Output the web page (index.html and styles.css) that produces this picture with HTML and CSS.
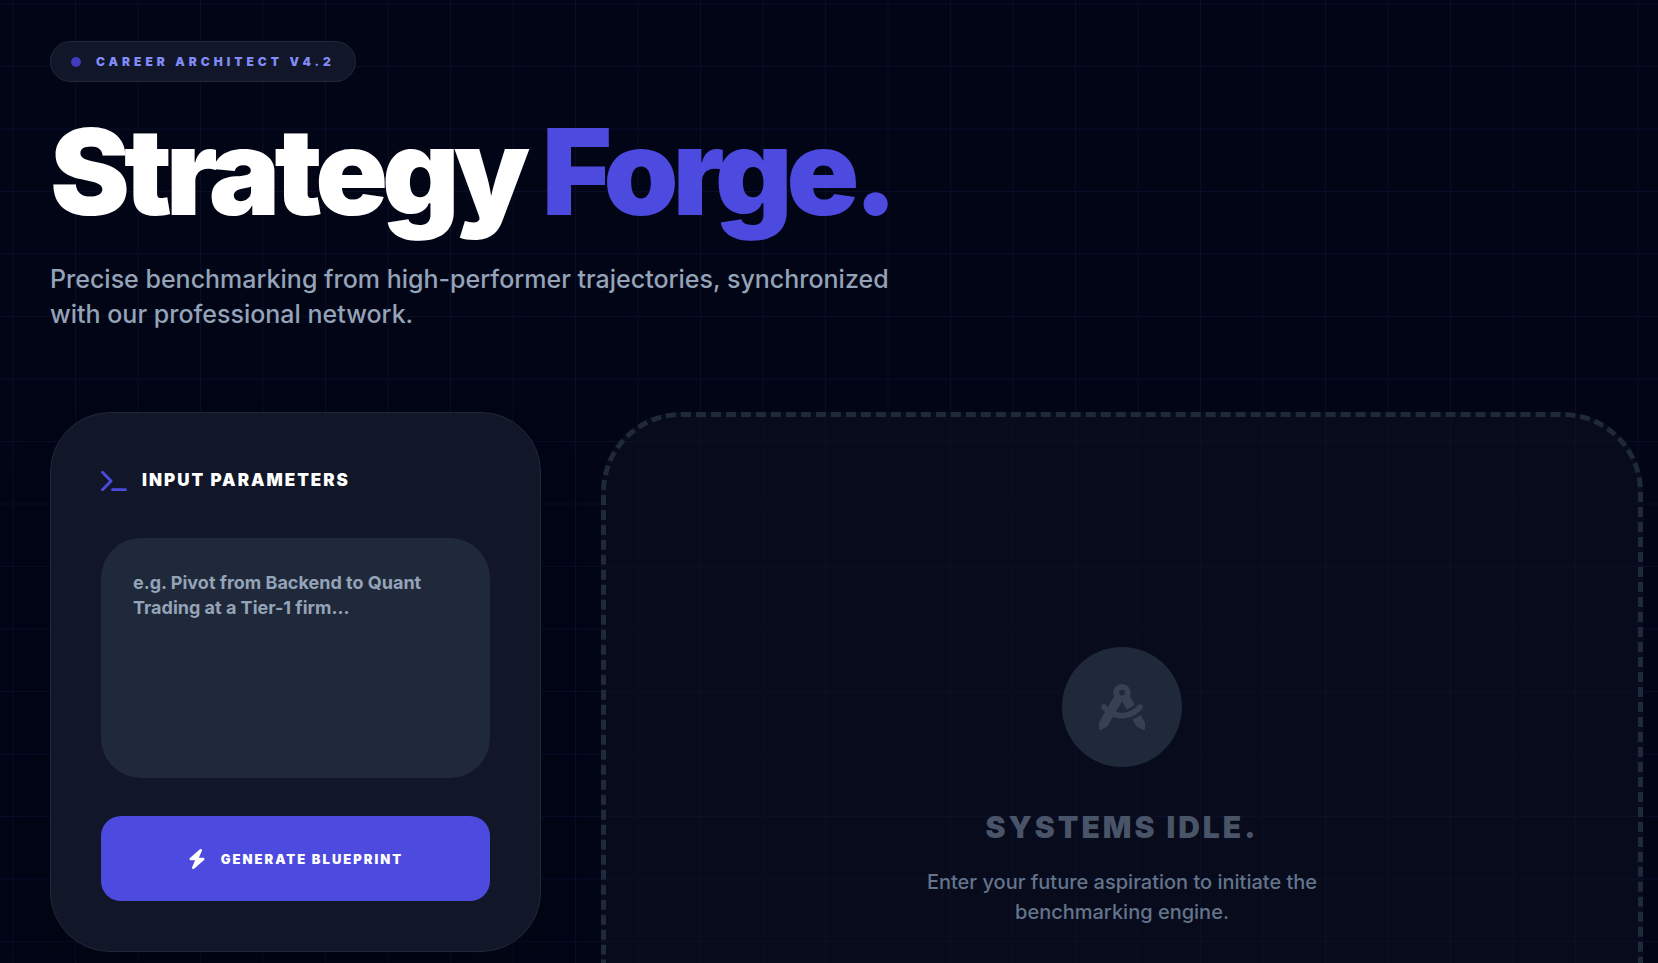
FILE: index.html
```html
<!DOCTYPE html>
<html lang="en">
<head>
	<meta charset="UTF-8">
	<meta name="viewport" content="width=device-width, initial-scale=1">
	<title>Strategy Forge</title>
	<link rel="stylesheet" href="styles.css">
</head>
<body>
	<header class="hero">
		<div class="badge"><span class="dot"></span>CAREER ARCHITECT V4.2</div>
		<h1>Strategy <span>Forge.</span></h1>
		<p>Precise benchmarking from high-performer trajectories, synchronized with our professional network.</p>
	</header>

	<main class="layout">
		<form class="card">
			<label class="card-title" for="goal">
				<svg class="icon-terminal" viewBox="0 0 576 512"><path d="M9.4 86.6C-3.1 74.1-3.1 53.9 9.4 41.4s32.8-12.5 45.3 0l192 192c12.5 12.5 12.5 32.8 0 45.3l-192 192c-12.5 12.5-32.8 12.5-45.3 0s-12.5-32.8 0-45.3L178.7 256 9.4 86.6zM256 416H544c17.7 0 32 14.3 32 32s-14.3 32-32 32H256c-17.7 0-32-14.3-32-32s14.3-32 32-32z"/></svg>
				INPUT PARAMETERS
			</label>
			<textarea id="goal" placeholder="e.g. Pivot from Backend to Quant Trading at a Tier-1 firm..."></textarea>
			<button type="button">
				<svg class="icon-bolt" viewBox="0 0 448 512"><path d="M349.4 44.6c5.9-13.7 1.5-29.7-10.6-38.5s-28.6-8-39.9 1.8l-256 224c-10 8.8-13.6 22.9-8.9 35.3S50.7 288 64 288H175.5L98.6 467.4c-5.9 13.7-1.5 29.7 10.6 38.5s28.6 8 39.9-1.8l256-224c10-8.8 13.6-22.9 8.9-35.3s-16.6-20.7-30-20.7H272.5L349.4 44.6z"/></svg>
				GENERATE BLUEPRINT
			</button>
		</form>

		<section class="idle">
			<div class="idle-icon">
				<svg viewBox="0 0 512 512"><path d="M352 96c0 14.3-3.1 27.9-8.8 40.2L396 227.4c-23.7 25.3-54.2 44.1-88.5 53.6L256 192h0 0l-68 117.5c21.5 6.8 44.3 10.5 68.1 10.5c70.7 0 133.8-32.7 174.9-84c11.1-13.8 31.2-16 45-5s16 31.2 5 45C428.1 341.8 347 384 256 384c-35.4 0-69.4-6.4-100.7-18.1L98.7 463.7C94 471.8 87 478.4 78.6 482.6L23.2 510.3c-5 2.5-10.9 2.2-15.6-.7S0 501.5 0 496V440.6c0-8.4 2.2-16.7 6.5-24.1l60-103.7C53.7 301.6 41.8 289.3 31.2 276c-11.1-13.8-8.8-33.9 5-45s33.9-8.8 45 5c5.7 7.1 11.8 13.8 18.2 20.1l69.4-119.9c-5.6-12.2-8.8-25.8-8.8-40.2c0-53 43-96 96-96s96 43 96 96zm21 297.9c32.6-12.8 62.5-30.8 88.9-52.9l43.7 75.5c4.2 7.3 6.5 15.6 6.5 24.1V496c0 5.5-2.9 10.7-7.6 13.6s-10.6 3.2-15.6 .7l-55.4-27.7c-8.4-4.2-15.4-10.8-20.1-18.9L373 393.9zM256 128a32 32 0 1 0 0-64 32 32 0 1 0 0 64z"/></svg>
			</div>
			<h2>SYSTEMS IDLE.</h2>
			<p>Enter your future aspiration to initiate the benchmarking engine.</p>
		</section>
	</main>
</body>
</html>
```
FILE: styles.css
```css
* {
	box-sizing: border-box;
}

body {
	margin: 0;
	padding: 41px 15px 50px 50px;
	font-family: Inter, "Liberation Sans", sans-serif;
	color: #fff;
	background-color: #020515;
	/* grid: a sharp line and a softer one in every 125px tile */
	background-image:
		linear-gradient(to right, #0a0c28 1px, transparent 1px, transparent 62px, #060820 62px, #060820 64px, transparent 64px),
		linear-gradient(to bottom, #0a0c28 1px, transparent 1px, transparent 62px, #060820 62px, #060820 64px, transparent 64px);
	background-size: 125px 125px;
	background-position: 75px 66px;
}

h1, h2, p {
	margin: 0;
}

svg {
	display: block;
	fill: currentColor;
}

.hero {
	margin-bottom: 80px;
}

.badge {
	display: inline-flex;
	align-items: center;
	gap: 15px;
	height: 41px;
	padding: 0 20px;
	border: 1px solid #1f2937;
	border-radius: 21px;
	background: #111628;
	color: #818cf8;
	font-size: 12px;
	font-weight: 900;
	letter-spacing: 4px;
}

.dot {
	width: 10px;
	height: 10px;
	border-radius: 50%;
	background: #3f3bbb;
}

h1 {
	margin-top: 30px;
	font-size: 120px;
	font-weight: 900;
	line-height: 120px;
	letter-spacing: -6px;
}

h1 span {
	color: #4d4adf;
}

.hero p {
	max-width: 840px;
	margin-top: 30px;
	color: #94a3b8;
	font-size: 25px;
	font-weight: 500;
	line-height: 35px;
}

.layout {
	display: grid;
	grid-template-columns: repeat(12, 1fr);
	column-gap: 60px;
	align-items: start;
}

.card {
	grid-column: span 4;
	display: flex;
	flex-direction: column;
	padding: 50px;
	border: 1px solid #1f2937;
	border-radius: 60px;
	background: #111628;
	box-shadow: 0 30px 60px -15px rgba(0, 0, 0, 0.3);
}

.card-title {
	display: flex;
	align-items: center;
	gap: 15px;
	margin-bottom: 40px;
	font-size: 17px;
	font-weight: 900;
	line-height: 35px;
	letter-spacing: 2px;
}

.icon-terminal {
	width: 26px;
	height: 24px;
	color: #4d4adf;
}

textarea {
	display: block;
	width: 100%;
	height: 240px;
	padding: 32px;
	border: 0;
	border-radius: 40px;
	background: #1f2939;
	color: #fff;
	font-family: inherit;
	font-size: 18px;
	font-weight: 700;
	line-height: 25px;
	resize: none;
}

textarea::placeholder {
	color: #94a3b8;
}

button {
	display: flex;
	align-items: center;
	justify-content: center;
	gap: 15px;
	height: 85px;
	margin-top: 38px;
	border: 0;
	border-radius: 20px;
	background: #4d4adf;
	color: #fff;
	font-family: inherit;
	font-size: 13px;
	font-weight: 900;
	letter-spacing: 2px;
	cursor: pointer;
}

.icon-bolt {
	width: 18px;
	height: 20px;
}

.idle {
	grid-column: span 8;
	display: flex;
	flex-direction: column;
	align-items: center;
	justify-content: center;
	min-height: 750px;
	border: 5px dashed #1f2939;
	border-radius: 80px;
	background: rgba(17, 22, 40, 0.35);
	text-align: center;
}

.idle-icon {
	display: flex;
	align-items: center;
	justify-content: center;
	width: 120px;
	height: 120px;
	border-radius: 50%;
	background: #1f2939;
	color: #374151;
}

.idle-icon svg {
	width: 46px;
	height: 46px;
}

.idle h2 {
	margin-top: 40px;
	color: #4a5468;
	font-size: 30px;
	font-weight: 900;
	line-height: 40px;
	letter-spacing: 3px;
}

.idle p {
	max-width: 400px;
	margin-top: 20px;
	color: #64748b;
	font-size: 20px;
	font-weight: 500;
	line-height: 30px;
}
```
